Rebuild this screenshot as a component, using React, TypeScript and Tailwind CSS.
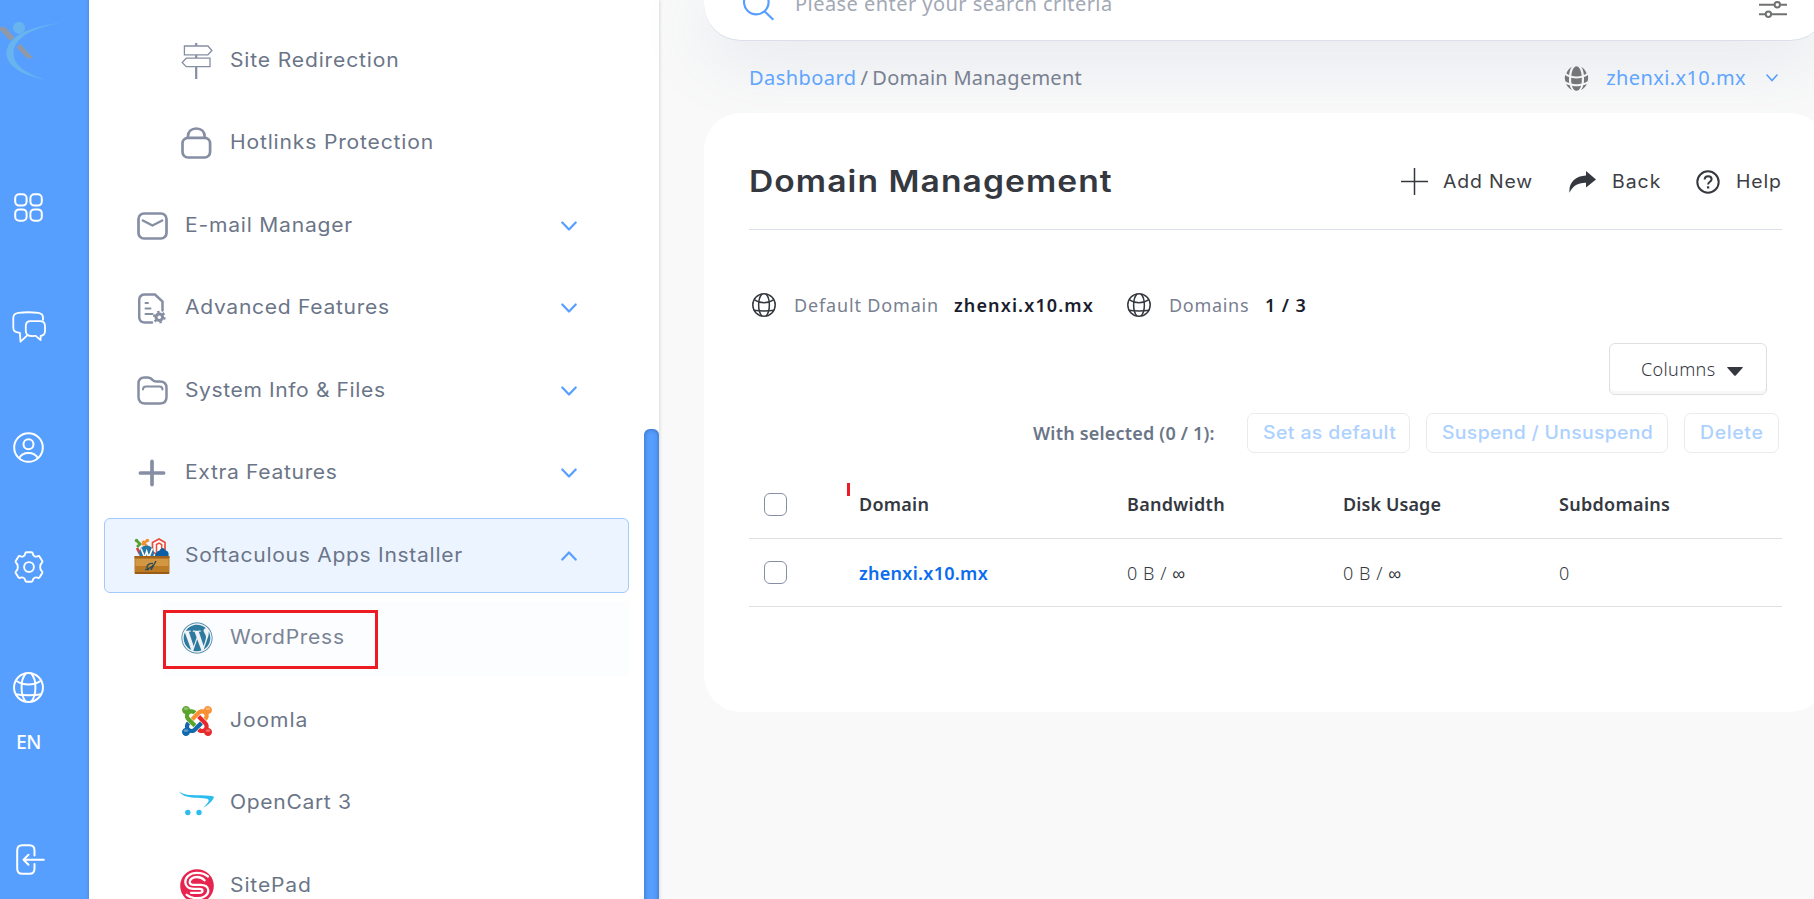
import type { ReactNode } from "react";
import { FaWordpress } from "react-icons/fa";

const UI = "font-['Inter',sans-serif]";
const WIDE = "inline-block origin-left scale-x-[1.08] whitespace-nowrap";

/* ---------- left rail icons ---------- */

function GlobeLine({ className }: { className: string }) {
  return (
    <svg viewBox="0 0 30 30" className={className} fill="none" stroke="currentColor" strokeWidth="1.9">
      <circle cx="15" cy="15" r="14" />
      <path d="M12.5 1.2C9.8 4 8.3 9 8.3 15s1.5 11 4.2 13.8M17.5 1.2C20.2 4 21.7 9 21.7 15s-1.500 11-4.200 13.800" />
      <path d="M3 8.500c3.600 2.400 7.500 3.600 12 3.600s8.400-1.200 12-3.600M2.300 21.500c3.900.7 8 1 12.700 1s8.800-.3 12.700-1" />
    </svg>
  );
}

function GridIcon() {
  return (
    <svg viewBox="0 0 29 29" className="size-[29px]" fill="none" stroke="currentColor" strokeWidth="2">
      <rect x="1.200" y="1.200" width="11.400" height="11.400" rx="4" />
      <rect x="16.400" y="1.200" width="11.400" height="11.400" rx="4" />
      <rect x="1.200" y="16.400" width="11.400" height="11.400" rx="4" />
      <rect x="16.400" y="16.400" width="11.400" height="11.400" rx="4" />
    </svg>
  );
}

function ChatIcon() {
  return (
    <svg viewBox="0 0 34 32" className="h-8 w-[34px]" fill="none" stroke="currentColor" strokeWidth="1.800" strokeLinejoin="round">
      <path d="M31 9.500V6.800c0-3.100-1.600-4.500-4.700-4.900C20 1.100 12.500 1.100 6.300 1.900 3 2.300 1.300 4 1.300 7v9.500c0 3 1.500 4.700 5 5.100l1.600.2.600 8.900 7-6.600" />
      <path d="M18.500 10.200h9.500c3.300 0 5 1.500 5 4.800v5c0 3-1.300 4.500-4.300 4.800l-.1 4.200-4.900-4.100c-2 .1-3 .2-4.600.1-3.700-.2-5.300-1.800-5.300-5v-5c0-3.300 1.500-4.800 4.700-4.800z" />
    </svg>
  );
}

function UserIcon() {
  return (
    <svg viewBox="0 0 31 31" className="size-[31px]" fill="none" stroke="currentColor" strokeWidth="2">
      <circle cx="15.500" cy="15.500" r="14.300" />
      <circle cx="15.500" cy="12.200" r="5" />
      <path d="M6.300 26.200c1.500-3.300 5-5.200 9.200-5.200s7.700 1.900 9.200 5.200" />
    </svg>
  );
}

function GearIcon() {
  return (
    <svg viewBox="0 0 30 32" className="h-8 w-[30px]" fill="none" stroke="currentColor" strokeWidth="1.900" strokeLinejoin="round">
      <circle cx="15" cy="16" r="4.900" />
      <path d="M12.800 1.200h4.400c1 0 1.600.6 1.700 1.600.2 2.200 2.600 3.500 4.500 2.500 1-.5 1.900-.3 2.400.6l2.300 3.900c.5.900.3 1.700-.5 2.300-1.900 1.300-1.900 6.500 0 7.800.8.600 1 1.400.5 2.300l-2.300 3.900c-.5.900-1.400 1.100-2.400.6-1.900-1-4.300.3-4.500 2.500-.1 1-.7 1.600-1.700 1.600h-4.400c-1 0-1.600-.6-1.700-1.600-.2-2.200-2.600-3.500-4.500-2.500-1 .5-1.900.3-2.400-.6l-2.300-3.900c-.5-.9-.3-1.700.5-2.300 1.900-1.300 1.900-6.500 0-7.800-.8-.6-1-1.400-.5-2.300l2.300-3.900c.5-.9 1.400-1.100 2.400-.6 1.900 1 4.300-.3 4.500-2.500.1-1 .7-1.600 1.700-1.600z" />
    </svg>
  );
}

function LogoutIcon() {
  return (
    <svg viewBox="0 0 29 31" className="h-[31px] w-[29px]" fill="none" stroke="currentColor" strokeWidth="2" strokeLinecap="round" strokeLinejoin="round">
      <path d="M18.500 11.500V6.500c0-3.400-1.700-5.300-5-5.300H6.300c-3.400 0-5.100 1.900-5.100 5.300v18c0 3.400 1.700 5.300 5.100 5.300h7.200c3.300 0 5-1.900 5-5.300v-4.500" />
      <path d="M27.800 15.700H7.500M12.500 10.700l-5 5 5 5" />
    </svg>
  );
}

function BrandMark() {
  return (
    <svg viewBox="0 0 62 60" className="h-[60px] w-[62px]">
      <path d="M0 7h5L14.500 17.500 10.500 21 0 10z" fill="#9199a6" />
      <path d="M16.500 27.500l3.800-3.800L33.300 38.300H27z" fill="#9199a6" />
      <circle cx="19" cy="7.700" r="6" fill="#68b4ee" />
      <path d="M61.500 2.800C38 5.500 7.500 13 6.500 33c0 12.500 14.500 22 38.500 26.600C24.500 53 13.500 44.500 13.500 33 13.800 16 38 6.500 61.500 2.800z" fill="#68b4ee" />
    </svg>
  );
}

/* ---------- menu icons ---------- */

function SignpostIcon() {
  return (
    <svg viewBox="0 0 32 36" className="h-9 w-8" fill="none" stroke="currentColor" strokeWidth="1.300">
      <path d="M3.400 3h23.500l4 4.500-4 4.300H3.400zM29 15.200H5.200l-4 4.300 4 4.200H29z" />
      <path strokeWidth="2.200" d="M15.200 0v3M15.200 12v3M15.200 24v12" />
    </svg>
  );
}

function LockIcon() {
  return (
    <svg viewBox="0 0 31 32" className="h-8 w-[31px]" fill="none" stroke="currentColor" strokeWidth="2.700">
      <rect x="1.500" y="10.800" width="27.600" height="19.700" rx="5.500" />
      <path d="M6.900 10.500V9.500c0-4.700 3.300-8 8.400-8s8.400 3.300 8.400 8v1" />
    </svg>
  );
}

function MailIcon() {
  return (
    <svg viewBox="0 0 31 28" className="h-7 w-[31px]" fill="none" stroke="currentColor" strokeWidth="2.700">
      <rect x="1.500" y="1.500" width="28" height="25" rx="5.500" />
      <path d="M5.800 8.500l9.700 5 9.700-5" strokeWidth="2.400" strokeLinecap="round" strokeLinejoin="round" />
    </svg>
  );
}

function DocGearIcon() {
  return (
    <svg viewBox="0 0 28 31" className="h-[31px] w-7" fill="none" stroke="currentColor" strokeWidth="2.500" strokeLinecap="round">
      <path d="M14 29.500H7c-3.700 0-5.800-2-5.800-5.800V7.300C1.200 3.500 3.300 1.500 7 1.500h10l7.500 7v9" />
      <path strokeWidth="2" d="M7.500 10h2.500M7.500 15.500h5M7.500 21h7" />
      <circle cx="21.300" cy="24.200" r="3.300" strokeWidth="3" />
      <circle cx="21.300" cy="24.200" r="5.300" strokeWidth="2.200" strokeDasharray="2.400 3.150" strokeLinecap="butt" />
    </svg>
  );
}

function FolderIcon() {
  return (
    <svg viewBox="0 0 31 29" className="h-[29px] w-[31px]" fill="none" stroke="currentColor" strokeWidth="2.500" strokeLinecap="round">
      <path d="M1.500 7.500c0-3.800 2-6 6-6h2.800c3.300 0 4 .8 5.500 2.700.9 1 1.700 1.300 3.200 1.300h3.800c4.300 0 6.700 2.200 6.700 6.500v9c0 4.300-2.400 6.500-6.700 6.500H8.200c-4.300 0-6.700-2.200-6.700-6.500z" />
      <path strokeWidth="2" d="M6 13.500c0-2 1-3 3-3h13.500c2 0 3 1 3 3" />
    </svg>
  );
}

function PlusBold() {
  return (
    <svg viewBox="0 0 28 28" className="size-7" fill="none" stroke="currentColor" strokeWidth="3.700" strokeLinecap="round">
      <path d="M14 2.400v23.200M2.400 14h23.200" />
    </svg>
  );
}

function CrateIcon() {
  return (
    <svg viewBox="0 0 36 36" className="size-9">
      <g fill="none" strokeWidth="2.600">
        <path d="M2 2l5 5M3 9l4-4" stroke="#5aa02c" />
        <path d="M13.500 2L8 7M8.500 3l5 6" stroke="#f6902f" />
        <path d="M3 10l3 6" stroke="#d93a3a" />
      </g>
      <circle cx="2.500" cy="2.500" r="1.700" fill="#5aa02c" />
      <circle cx="13.500" cy="2.500" r="1.700" fill="#f6902f" />
      <path d="M18.500 4.500L25 1l6 3.500V13l-6 4-6.500-3z" fill="#fff" stroke="#ea4b3c" strokeWidth="1.700" />
      <path d="M22.500 14V6.500l2.500-1.500 2.700 1.500V12" fill="none" stroke="#ea4b3c" strokeWidth="1.500" />
      <circle cx="12.500" cy="15" r="7.500" fill="#2478a3" />
      <path d="M7 10.500l3.700 9 2-6 2 6 3.700-9" fill="none" stroke="#fff" strokeWidth="1.700" />
      <path d="M21 18c0-3 2-5 4.500-5.500 1.500-3.500 5-3.500 6 0 3 .5 3.500 3 3 5.500z" fill="#0c5fa5" />
      <rect x=".500" y="18" width="35" height="18" rx="1" fill="#bb7a24" />
      <rect x=".500" y="18" width="35" height="2" fill="#a0621d" />
      <rect x="1.500" y="21" width="33" height="7" fill="#d19742" />
      <rect x="1" y="34" width="34" height="2" fill="#9a5c15" />
      <path d="M22 23l-5 9M19 25.500c-3-.5-6.500 1.500-6 4 .5 1.800 4 .8 6.500-2.500M11 31.500h4" fill="none" stroke="#2c4a58" strokeWidth="1.400" />
    </svg>
  );
}

function WordPressIcon() {
  return (
    <div className="flex size-8 items-center justify-center rounded-full bg-[#f1f2f4]">
      <FaWordpress className="size-8 text-[#2c7a9f]" />
    </div>
  );
}

function JoomlaIcon() {
  return (
    <svg viewBox="0 32 448 448" className="size-[30px]">
      <path fill="#5ba42b" d="M.6 92.100C.6 58.800 27.400 32 60.400 32c30 0 54.500 21.900 59.200 50.200 32.600-7.600 67.100.6 96.500 30l-44.300 44.300c-20.500-20.500-42.600-16.300-55.400-3.500-14.300 14.300-14.300 37.900 0 52.200l99.500 99.500-44 44.300c-87.700-87.200-49.700-49.700-99.800-99.700-26.800-26.500-35-64.800-24.800-98.900C20.400 144.600.6 120.700.6 92.100z" />
      <path fill="#f98f30" d="M130.100 208.500l44.300 44.300c10-10 89.700-89.700 99.700-99.800 14.300-14.300 37.600-14.300 51.900 0 12.800 12.800 17 35-3.500 55.400l44 44.300c31.200-31.200 38.500-67.600 28.900-101.200 29.200-4.100 51.900-29.200 51.900-59.500 0-33.200-26.800-60.100-59.800-60.100-30.300 0-55.400 22.500-59.500 51.600-33.800-9.900-71.700-1.500-98.300 25.100-18.300 19.100-71.100 71.500-99.600 99.900z" />
      <path fill="#e6292b" d="M396.400 360.700c8.200-32.700-.9-68.500-26.300-93.900-11.800-12.200 5 4.700-99.500-99.700l-44.300 44.300 99.700 99.700c14.300 14.300 14.300 37.600 0 51.900-12.800 12.800-35 17-55.400-3.500l-44 44.300c27.600 30.200 68 38.800 102.700 28 5.500 27.400 29.700 48.100 58.900 48.100 33 0 59.800-26.800 59.800-60.100 0-30.200-22.500-55-51.600-59.100z" />
      <path fill="#1268ae" d="M312.100 307.600l-44-44.300c-87 86.400-50.400 50.400-99.700 99.800-14.300 14.300-37.600 14.300-51.900 0-13.100-13.400-16.900-35.300 3.200-55.400l-44-44.300c-30.200 30.200-38 65.200-29.500 98.300-26.700 6-46.200 29.900-46.200 58.200C0 453.200 26.800 480 59.800 480c28.600 0 52.500-19.800 58.600-46.700 32.700 8.200 68.500-.6 94.200-26 32.100-32 12.200-12.400 99.500-99.700z" />
      <g fill="#fff" opacity=".3">
        <ellipse cx="60" cy="72" rx="36" ry="22" />
        <ellipse cx="388" cy="72" rx="36" ry="22" />
        <ellipse cx="60" cy="400" rx="36" ry="22" />
        <ellipse cx="388" cy="400" rx="36" ry="22" />
      </g>
    </svg>
  );
}

function OpenCartIcon() {
  return (
    <svg viewBox="0 0 35 25" className="h-[25px] w-[35px]" fill="#2bbdee">
      <path d="M0 .300C3 3 8 4.200 16 4.200c8 0 14 .2 17.800 1 1.400.3 1.300 1.400.4 2.700-1.900 2.900-5.200 5.900-10 9 3.300-3.500 5.200-5.800 5.500-7.200.2-1.100-.7-1.800-3.200-2.100-2.700-.4-6.500-.5-10.500-.8C7.500 6.300 2.500 4.500 0 .300z" />
      <circle cx="8.800" cy="21.500" r="2.700" />
      <circle cx="20" cy="21.500" r="2.700" />
    </svg>
  );
}

function SitePadIcon() {
  return (
    <svg viewBox="0 0 34 34" className="size-[34px]">
      <circle cx="17" cy="17" r="16.800" fill="#e6244f" />
      <g fill="none" stroke="#fff" strokeWidth="2.300" strokeLinecap="round">
        <path d="M28 7.500C24.500 4.600 21 3.800 17 3.800 10 3.800 5.300 8 5.300 13c0 4.500 3.700 6.800 8.200 6.800h6c4 0 4 4 0 4H11" />
        <path d="M24.500 11.300C22.500 9 20 8 17 8c-4.300 0-7.300 2.200-7.300 4.900 0 2 1.500 2.900 4.300 2.900h6.500c4.500 0 7.800 2 7.800 5.700 0 4.800-5 7.700-10.800 7.700-4.500 0-8-1-10.800-3.400" />
      </g>
    </svg>
  );
}

function Chevron({ up = false }: { up?: boolean }) {
  return (
    <svg viewBox="0 0 16 10" className="h-2.5 w-4" fill="none" stroke="#569fff" strokeWidth="2.200" strokeLinecap="round" strokeLinejoin="round">
      <path d={up ? "M1.300 8.500L8 1.500l6.700 7" : "M1.300 1.500l6.700 7 6.700-7"} />
    </svg>
  );
}

/* ---------- menu rows ---------- */

function SubItem({ icon, children, track, hover = false }: { icon: ReactNode; children: string; track: string; hover?: boolean }) {
  return (
    <div className={`ml-[59px] flex h-[75px] shrink-0 items-center ${hover ? "bg-[#fcfdff] text-[#7b8396]" : "text-[#6b7588]"}`}>
      <div className="flex w-[67px] justify-center text-[#868ea3]">{icon}</div>
      <span className={`text-[19.500px] ${WIDE} ${track}`}>{children}</span>
    </div>
  );
}

function MenuItem({ icon, children, track, active = false }: { icon: ReactNode; children: string; track: string; active?: boolean }) {
  return (
    <div
      className={`flex h-[75px] shrink-0 items-center justify-between border pr-[51px] text-[#6b7588] ${
        active ? "rounded-[6px] border-[#a3c9fd] bg-[#ebf4ff]" : "border-transparent"
      }`}
    >
      <div className="flex items-center">
        <div className="ml-[14px] flex w-[66px] justify-center text-[#868ea3]">{icon}</div>
        <span className={`text-[19.500px] ${WIDE} ${track}`}>{children}</span>
      </div>
      <Chevron up={active} />
    </div>
  );
}

/* ---------- content pieces ---------- */

function GlobeSolid() {
  return (
    <svg viewBox="0 0 25 25" className="size-[25px]" fill="#747678">
      <path d="M12.500.200c2.700 0 4.700 4.300 5.200 9.600-3.300.8-7.100.8-10.400 0C7.800 4.500 9.800.2 12.500.2z" />
      <path d="M7.200 11.700c3.300.9 7.300.9 10.600 0 .1 2 0 4-.2 5.800-3.200.9-7 .9-10.200 0-.2-1.800-.3-3.800-.2-5.800zM7.900 19.700c2.900.7 6.300.7 9.200 0-.8 3-2.600 5.100-4.600 5.100s-3.800-2.100-4.600-5.100z" />
      <path d="M7.800 1c-1.500 1.900-2.400 4.800-2.700 8C4 8.600 3 8 2.400 7.300 3.500 4.400 5.400 2.200 7.800 1zM17.200 1c1.500 1.900 2.400 4.800 2.700 8 1.100-.4 2.100-1 2.700-1.700-1.100-2.900-3-5.100-5.400-6.300z" />
      <path d="M1.200 9c1 .9 2.300 1.600 3.800 2.100-.1 2-.1 3.900.2 5.800-1.500-.4-2.800-1-3.800-1.700C.7 13 .7 11 1.200 9zM23.800 9c-1 .9-2.300 1.600-3.800 2.100.1 2 .1 3.900-.2 5.800 1.500-.4 2.800-1 3.800-1.700.7-2.200.7-4.200.2-6.200z" />
      <path d="M2.200 18c1 .5 2.200.9 3.500 1.200.5 2 1.300 3.600 2.300 4.800-2.500-1.200-4.600-3.300-5.800-6zM22.800 18c-1 .5-2.200.9-3.500 1.200-.5 2-1.300 3.600-2.300 4.800 2.500-1.200 4.600-3.300 5.800-6z" />
    </svg>
  );
}

function Checkbox() {
  return <div className="size-[23px] rounded-[6px] border border-[#868ea3] bg-white" />;
}

function Header({ children, className }: { children: string; className: string }) {
  return <div className={`text-[18px] font-semibold whitespace-nowrap text-[#35383f] ${className}`}>{children}</div>;
}

function Cell({ children, className }: { children: string; className: string }) {
  return <div className={`pt-px text-[18px] font-light whitespace-nowrap text-[#35383f] ${className}`}>{children}</div>;
}

function DisabledButton({ children, className, track }: { children: string; className: string; track: string }) {
  return (
    <div className={`flex h-10 items-center rounded-[7px] border border-[#ebebeb] pb-0.5 pl-[15px] ${UI} text-[18px] font-medium text-[#add1ff] ${className}`}>
      <span className={`${WIDE} ${track}`}>{children}</span>
    </div>
  );
}

export default function App() {
  return (
    <div className="flex h-[899px] w-[1814px] overflow-hidden bg-[#f9f9f9] font-['Noto_Sans',sans-serif]">
      {/* rail */}
      <nav className="flex w-[89px] shrink-0 flex-col bg-[#569fff] text-white shadow-[inset_-4px_0_3px_-3px_rgba(30,70,140,0.15)]">
        <div className="h-[90px] pt-5">
          <BrandMark />
        </div>
        <div className="flex w-[57px] flex-col items-center">
          <div className="mt-[57px] flex h-[120px] items-center"><GridIcon /></div>
          <div className="flex h-[120px] items-center"><ChatIcon /></div>
          <div className="flex h-[120px] items-center"><UserIcon /></div>
          <div className="flex h-[120px] items-center"><GearIcon /></div>
          <div className="flex h-[120px] items-center"><GlobeLine className="size-[31px]" /></div>
          <div className="-mt-[19px] h-7 text-[19.500px] leading-7 font-medium tracking-[-0.500px]">EN</div>
          <div className="mt-[88px] pl-1"><LogoutIcon /></div>
        </div>
      </nav>

      {/* menu */}
      <aside className="flex w-[570px] shrink-0 justify-between overflow-hidden bg-white pl-[15px] shadow-[1px_0_3px_rgba(0,0,0,0.12)]">
        <div className={`relative flex w-[525px] flex-col gap-[7.500px] pt-[23px] ${UI}`}>
          <SubItem icon={<SignpostIcon />} track="tracking-[0.780px]">Site Redirection</SubItem>
          <SubItem icon={<LockIcon />} track="tracking-[0.770px]">Hotlinks Protection</SubItem>
          <MenuItem icon={<MailIcon />} track="tracking-[0.730px]">E-mail Manager</MenuItem>
          <MenuItem icon={<DocGearIcon />} track="tracking-[0.650px]">Advanced Features</MenuItem>
          <MenuItem icon={<FolderIcon />} track="tracking-[0.560px]">System Info &amp; Files</MenuItem>
          <MenuItem icon={<PlusBold />} track="tracking-[0.610px]">Extra Features</MenuItem>
          <MenuItem icon={<CrateIcon />} track="tracking-[0.650px]" active>Softaculous Apps Installer</MenuItem>
          <SubItem icon={<WordPressIcon />} track="tracking-[0.660px]" hover>WordPress</SubItem>
          <SubItem icon={<JoomlaIcon />} track="tracking-[0.850px]">Joomla</SubItem>
          <SubItem icon={<OpenCartIcon />} track="tracking-[0.620px]">OpenCart 3</SubItem>
          <SubItem icon={<SitePadIcon />} track="tracking-[0.800px]">SitePad</SubItem>
          <div className="absolute top-[610px] left-[59px] h-[59px] w-[215px] border-[3px] border-[#ed1c24]" />
        </div>
        <div className="mt-[429px] h-[600px] w-[15px] shrink-0 rounded-[6px] bg-[#569fff] shadow-[inset_0_0_5px_rgba(20,50,100,0.5)]" />
      </aside>

      {/* content */}
      <main className="w-[1155px] shrink-0 pl-[45px]">
        <div className="relative w-[1123px]">
          <div className="flex h-[41px] items-start rounded-b-[37px] border-b border-[#dadfe9] bg-white pl-[39px] shadow-[0_12px_70px_rgba(110,135,175,0.2)]">
            <svg viewBox="0 0 32 21" className="h-[21px] w-8 shrink-0" fill="none" stroke="#569fff" strokeWidth="2.200">
              <circle cx="13.300" cy="2" r="12.300" />
              <path d="M21.800 11.500l8.500 8.200" />
            </svg>
            <span className="-mt-[10px] ml-5 text-[20px] leading-7 tracking-[0.450px] whitespace-nowrap text-[#a2a8b4]">Please enter your search criteria</span>
            <svg viewBox="0 0 28 18" className="mr-[40px] ml-auto h-[18px] w-7" fill="none" stroke="#6f7173" strokeWidth="2">
              <path d="M0 4.700h15M21.500 4.700H28M0 14.200h6.300M12.500 14.200H28" />
              <circle cx="18.300" cy="4.700" r="2.700" />
              <circle cx="9.400" cy="14.200" r="2.700" />
            </svg>
          </div>

          <div className="flex h-[72px] items-center justify-between pt-0.5 pr-[49px] pl-[45px] text-[20px] whitespace-nowrap">
            <div className="flex tracking-[0.250px] text-[#788091]">
              <span className="tracking-[0.450px] text-[#60a5ff]">Dashboard</span>
              <span className="mx-[4px]">/</span>
              <span>Domain Management</span>
            </div>
            <div className="flex items-center">
              <GlobeSolid />
              <span className="ml-[17px] tracking-[0.400px] text-[#60a5ff]">zhenxi.x10.mx</span>
              <svg viewBox="0 0 12 8" className="ml-[20px] h-2 w-3" fill="none" stroke="#569fff" strokeWidth="1.600" strokeLinecap="round">
                <path d="M1 1l5 5.500L11 1" />
              </svg>
            </div>
          </div>

          <section className="h-[599px] rounded-[37px] bg-white px-[45px]">
            <div className={`flex h-[117px] items-center border-b border-[#dadfe9] pt-[21px] ${UI} text-[18px] whitespace-nowrap text-[#3c3e44]`}>
              <div className="grow">
                <h1 className="inline-block origin-left scale-x-[1.12] text-[30px] font-semibold tracking-[0.950px] text-[#35383f]">Domain Management</h1>
              </div>
              <svg viewBox="0 0 27 27" className="size-[27px]" stroke="#35383f" strokeWidth="1.500">
                <path d="M13.500 0v27M0 13.500h27" />
              </svg>
              <div className="ml-[15px] w-[126px]"><span className={`${WIDE} tracking-[0.750px]`}>Add New</span></div>
              <svg viewBox="0 0 27 22" className="h-[22px] w-[27px]" fill="#35383f">
                <path d="M17 0l10 8.500L17 16.500v-4.800C9 11.500 3.500 15 .500 21.700-.500 12 6 4.800 17 4.500z" />
              </svg>
              <div className="ml-4 w-[84px]"><span className={`${WIDE} tracking-[0.900px]`}>Back</span></div>
              <svg viewBox="0 0 24 24" className="size-6" fill="none" stroke="#35383f" strokeWidth="2">
                <circle cx="12" cy="12" r="10.700" />
                <path d="M8.600 9.500c.2-2 1.500-3.200 3.500-3.200s3.500 1.200 3.500 3c0 2.400-3.500 2.500-3.500 5.200" />
                <path d="M12.100 16.300v2.200" strokeWidth="2.300" />
              </svg>
              <div className="ml-4 w-[46px]"><span className={`${WIDE} tracking-[0.800px]`}>Help</span></div>
            </div>

            <div className="mt-[59px] flex h-8 items-center text-[18px] whitespace-nowrap text-[#788091]">
              <GlobeLine className="ml-[3px] size-6 text-[#35383f]" />
              <span className="ml-[18px] w-[160px] tracking-[0.840px]">Default Domain</span>
              <span className="w-[173px] font-semibold tracking-[1.120px] text-[#1a1d2e]">zhenxi.x10.mx</span>
              <GlobeLine className="size-6 text-[#35383f]" />
              <span className="ml-[18px] w-[96px] tracking-[0.700px]">Domains</span>
              <span className="font-semibold tracking-[0.900px] text-[#1a1d2e]">1 / 3</span>
            </div>

            <div className="mt-[22px] flex justify-end pr-[15px]">
              <div className="flex h-[52px] w-[158px] items-center rounded-[6px] border border-[#dfdfe1] pl-[31px] text-[18px] shadow-[inset_0_-3px_0_#f8f8f8]">
                <span className="w-[86px] font-light tracking-[0.350px] text-[#35383f]">Columns</span>
                <svg viewBox="0 0 16 9" className="mt-[5px] h-[9px] w-4" fill="#35383f">
                  <path d="M.300 0h15.400v.800L9 8.300c-.6.700-1.400.7-2 0L.300.800z" />
                </svg>
              </div>
            </div>

            <div className="mt-[18px] flex items-center justify-end pr-[3px]">
              <span className="w-[214px] text-[18px] font-semibold tracking-[0.200px] whitespace-nowrap text-[#6b7588]">With selected (0 / 1):</span>
              <DisabledButton className="w-[163px]" track="tracking-[0.380px]">Set as default</DisabledButton>
              <DisabledButton className="ml-4 w-[242px]" track="tracking-[0.280px]">Suspend / Unsuspend</DisabledButton>
              <DisabledButton className="ml-4 w-[95px]" track="tracking-[0.600px]">Delete</DisabledButton>
            </div>

            <div className="relative mt-[17px] flex h-[69px] items-center border-b border-[#dfdfe1]">
              <div className="w-[110px] pl-[15px]"><Checkbox /></div>
              <Header className="w-[268px] tracking-[0.250px]">Domain</Header>
              <Header className="w-[216px] tracking-[0.300px]">Bandwidth</Header>
              <Header className="w-[216px] tracking-[0.100px]">Disk Usage</Header>
              <Header className="tracking-[0.300px]">Subdomains</Header>
              <div className="absolute top-[13px] left-[98px] h-[13px] w-[3px] bg-[#ed1c24]" />
            </div>
            <div className="flex h-[68px] items-center border-b border-[#dfdfe1]">
              <div className="w-[110px] pl-[15px]"><Checkbox /></div>
              <div className="w-[268px] pt-px text-[18px] font-semibold tracking-[0.280px] whitespace-nowrap text-[#0a6cf0]">zhenxi.x10.mx</div>
              <Cell className="w-[216px] tracking-[0.550px]">0 B / ∞</Cell>
              <Cell className="w-[216px] tracking-[0.550px]">0 B / ∞</Cell>
              <Cell className="">0</Cell>
            </div>
          </section>
        </div>
      </main>
    </div>
  );
}
